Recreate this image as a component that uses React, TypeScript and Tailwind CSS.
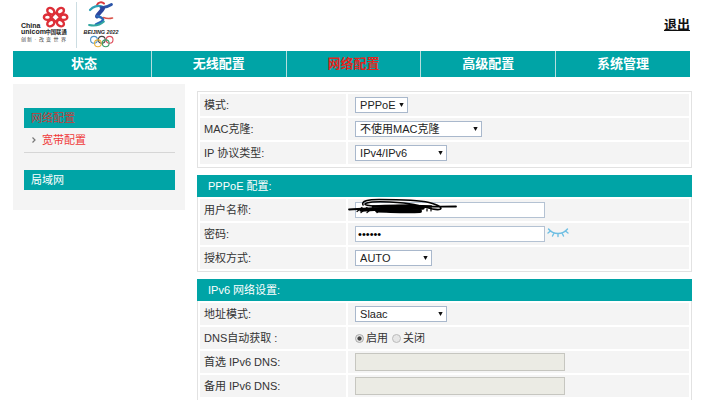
import React from 'react';

const navItems = ['状态', '无线配置', '网络配置', '高级配置', '系统管理'];

function Logo() {
  return (
    <svg
      viewBox="18 0 112 48"
      className="w-28 h-12"
      role="img"
      aria-label="China Unicom"
      fontFamily='"Liberation Sans", "Noto Sans CJK SC", sans-serif'
    >
      <g fill="none" stroke="#dd2f38" strokeWidth="2.4">
        <ellipse cx="50.8" cy="11.2" rx="3.8" ry="2.9" transform="rotate(35 50.8 11.2)" />
        <ellipse cx="60.4" cy="11.2" rx="3.8" ry="2.9" transform="rotate(-35 60.4 11.2)" />
        <ellipse cx="47.4" cy="17.2" rx="3.5" ry="2.7" />
        <ellipse cx="63.8" cy="17.2" rx="3.5" ry="2.7" />
        <ellipse cx="50.8" cy="23.2" rx="3.8" ry="2.9" transform="rotate(-35 50.8 23.2)" />
        <ellipse cx="60.4" cy="23.2" rx="3.8" ry="2.9" transform="rotate(35 60.4 23.2)" />
        <path d="M55.6 12.8l4.4 4.4-4.4 4.4-4.4-4.4z" strokeWidth="2" />
      </g>
      <text x="21" y="27.5" fontSize="7" fontWeight="bold" fill="#222">China</text>
      <text x="21" y="33.5" fontSize="7" fontWeight="bold" fill="#222">unicom</text>
      <text x="45.5" y="33.5" fontSize="5.3" fontWeight="bold" fill="#222">中国联通</text>
      <text x="21" y="40.5" fontSize="5" fill="#444">创</text>
      <text x="27" y="40.5" fontSize="5" fill="#444">新</text>
      <text x="34.5" y="40.5" fontSize="5" fill="#444">·</text>
      <text x="39" y="40.5" fontSize="5" fill="#444">改</text>
      <text x="46" y="40.5" fontSize="5" fill="#444">变</text>
      <text x="53.5" y="40.5" fontSize="5" fill="#444">世</text>
      <text x="61" y="40.5" fontSize="5" fill="#444">界</text>
      <path d="M76.5 2v46" stroke="#ccdde2" strokeWidth="1" />

      <g strokeLinecap="round" strokeLinejoin="round" fill="none">
        <path d="M97 5c1-3 5-3.5 7-1.5" stroke="#d8383c" strokeWidth="2" />
        <path d="M90 10c3-3.5 8-5 12-3.5" stroke="#2e9fb5" strokeWidth="2.2" />
        <path d="M101 7.5c4 .3 7-.8 10.5-3" stroke="#2c55a8" strokeWidth="2.8" />
        <path d="M103 8.5c-2 3.5-5 5-6 8" stroke="#2d459c" strokeWidth="4" />
        <path d="M97 16c3 1 6 1.5 6 3.5s-4 3.5-7 5" stroke="#2869b8" strokeWidth="2.6" />
        <path d="M103.5 17.5c2.500 1 5 1.500 9 .5" stroke="#d9534a" strokeWidth="1.6" />
        <path d="M89 25c5 1 11 .3 15-3.5" stroke="#32a7a0" strokeWidth="1.8" />
      </g>
      <text x="83.5" y="33.5" fontSize="5.4" fontWeight="bold" fontStyle="italic" fill="#222">BEIJING 2022</text>
      <g fill="none" strokeWidth="1.1">
        <circle cx="94" cy="39.8" r="3.4" stroke="#4c92c8" />
        <circle cx="101.8" cy="39.8" r="3.4" stroke="#444" />
        <circle cx="109.6" cy="39.8" r="3.4" stroke="#dd4a58" />
        <circle cx="97.9" cy="43.3" r="3.4" stroke="#e6b23c" />
        <circle cx="105.7" cy="43.3" r="3.4" stroke="#3a9f68" />
      </g>
    </svg>
  );
}

function Row({ label, htmlFor, children }: { label: string; htmlFor?: string; children: React.ReactNode }) {
  return (
    <tr className="h-[22px]">
      <th scope="row" className="w-[30%] bg-[#f4f4f4] p-0 pl-1 text-left font-normal whitespace-nowrap">
        <label htmlFor={htmlFor}>{label}</label>
      </th>
      <td className="bg-[#f4f4f4] p-0 pl-[7px]">
        <div className="flex items-center">{children}</div>
      </td>
    </tr>
  );
}

function Panel({ title, open, children }: { title?: string; open?: boolean; children: React.ReactNode }) {
  return (
    <section>
      {title && <h2 className="h-[22px] bg-[#00a4a6] pl-[11px] text-[11px] leading-[22px] text-white">{title}</h2>}
      <div
        className={`border-x border-[#e2e2e2] ${title ? '' : 'border-t pb-px'} ${open ? 'pb-1' : 'border-b'}`}
      >
        <table className="w-full border-separate border-spacing-[2px]">
          <tbody>{children}</tbody>
        </table>
      </div>
    </section>
  );
}

function Select({ id, value, width }: { id: string; value: string; width: string }) {
  return (
    <div className={`relative ${width}`}>
      <select
        id={id}
        defaultValue={value}
        className="block h-4 w-full appearance-none border border-[#a9b8cc] bg-white pl-1 text-[11px] leading-[14px] text-[#222]"
      >
        <option>{value}</option>
      </select>
      <svg viewBox="0 0 5 4" className="pointer-events-none absolute top-1.5 right-1 h-1 w-[5px]">
        <path d="M.3 0h4.4L2.5 4z" fill="#111" />
      </svg>
    </div>
  );
}

function Radio({ label, checked }: { label: string; checked?: boolean }) {
  return (
    <label className="mr-1 flex items-center gap-0.5">
      <input
        type="radio"
        name="dns-auto"
        defaultChecked={checked}
        className="size-[9px] appearance-none rounded-full border border-[#bbb] bg-[#e6e6e6] checked:border-[#aaa] checked:bg-[radial-gradient(circle,#444_35%,#e6e6e6_50%)]"
      />
      {label}
    </label>
  );
}

function Scribble() {
  return (
    <svg viewBox="0 0 112 18" className="pointer-events-none absolute -top-1 -left-2 h-[18px] w-28" fill="none" stroke="#000" strokeLinecap="round">
      <path d="M2 11.5C15 10 30 11 45 9.5S82 9 109 8.5" strokeWidth="1.8" />
      <path d="M14 12c18-1 38-2 62-2" strokeWidth="3.5" />
      <path d="M26 8.5c14-1 34-1 58 0" strokeWidth="2.5" />
      <path d="M30 12.5c12 0 26 1.5 43 .5" strokeWidth="4" />
      <path d="M16 7c-2-4 5-5.5 16-5.5S72 2 82 4.5s15 6 10 7-15-3-25-5S28 2.5 20 5s10 4 24 3 28-1 36 1" strokeWidth="1.6" />
      <path d="M10 13.5l5-4m-1 5l6-5m0 5l6-5m4 5l5-5M80 13v-2m4 2v-2" strokeWidth="1.2" />
    </svg>
  );
}

export default function App() {
  return (
    <div className='min-h-screen overflow-hidden bg-white pl-[13px] font-["Liberation_Sans","Noto_Sans_CJK_SC",sans-serif] text-[11px] leading-[16px] text-[#333]'>
      <header className="flex items-start justify-between pr-[19px] pb-[3px] pl-[5px]">
        <Logo />
        <a href="#logout" className="mt-4 text-[13px] leading-[18px] font-bold text-[#111] underline">
          退出
        </a>
      </header>

      <nav className="mr-[19px] flex divide-x divide-[#b5dede] bg-[#00a4a6]">
        {navItems.map((item) => (
          <a
            key={item}
            href="#nav"
            className={`flex-1 py-1 text-center text-[13px] leading-[18px] font-bold first:pl-1 ${
              item === '网络配置' ? 'text-[#e32420]' : 'text-white'
            }`}
          >
            {item}
          </a>
        ))}
      </nav>

      <div className="mr-[17px] flex items-start gap-3 pt-[7px]">
        <aside className="w-[172px] shrink-0 bg-[#f4f4f4] pt-6 pr-2.5 pb-5 pl-[11px]">
          <a href="#network" className="block h-5 bg-[#00a4a6] pl-[7px] leading-[20px] text-[#c93a36]">
            网络配置
          </a>
          <a href="#broadband" className="flex h-[25px] items-center gap-1.5 border-b border-[#d6d6d6] pl-2 text-[#f03a3a]">
            <svg viewBox="0 0 4 6" className="h-1.5 w-1" fill="none" stroke="#777" strokeWidth="1.2">
              <path d="M.5.5L3 3 .5 5.5" />
            </svg>
            宽带配置
          </a>
          <a href="#lan" className="mt-[17px] block h-5 bg-[#00a4a6] pl-[7px] leading-[20px] text-white">
            局域网
          </a>
        </aside>

        <main className="flex min-w-0 flex-1 flex-col gap-[7px] pt-[7px]">
          <Panel>
            <Row label="模式:" htmlFor="mode">
              <Select id="mode" value="PPPoE" width="w-[53px]" />
            </Row>
            <Row label="MAC克隆:" htmlFor="mac">
              <Select id="mac" value="不使用MAC克隆" width="w-[127px]" />
            </Row>
            <Row label="IP 协议类型:" htmlFor="ip-type">
              <Select id="ip-type" value="IPv4/IPv6" width="w-[92px]" />
            </Row>
          </Panel>

          <Panel title="PPPoE 配置:">
            <Row label="用户名称:" htmlFor="username">
              <div className="relative">
                <input id="username" type="text" className="block h-4 w-[190px] border border-[#b4c2d3] bg-white px-0.5" />
                <Scribble />
              </div>
            </Row>
            <Row label="密码:" htmlFor="password">
              <input
                id="password"
                type="password"
                defaultValue="123456"
                className="block h-4 w-[190px] border border-[#b4c2d3] bg-white px-0.5 text-[11px] text-black"
              />
              <button type="button" aria-label="显示密码" className="ml-0.5">
                <svg viewBox="0 0 22 12" className="block h-3 w-[22px]" fill="none" stroke="#6fbfe3" strokeWidth="1.4" strokeLinecap="round">
                  <path d="M1.5 1c5 6 14 6 19 0M3.5 3L1 5M7 5L5.5 8M11 5.5v3M15 5l1.5 3M18.5 3L21 5" />
                </svg>
              </button>
            </Row>
            <Row label="授权方式:" htmlFor="auth">
              <Select id="auth" value="AUTO" width="w-[77px]" />
            </Row>
          </Panel>

          <Panel title="IPv6 网络设置:" open>
            <Row label="地址模式:" htmlFor="addr-mode">
              <Select id="addr-mode" value="Slaac" width="w-[92px]" />
            </Row>
            <Row label="DNS自动获取 :">
              <Radio label="启用" checked />
              <Radio label="关闭" />
            </Row>
            <Row label="首选 IPv6 DNS:" htmlFor="dns1">
              <input id="dns1" type="text" disabled className="block h-[18px] w-[210px] border border-[#c6c6c0] bg-[#ebebe4]" />
            </Row>
            <Row label="备用 IPv6 DNS:" htmlFor="dns2">
              <input id="dns2" type="text" disabled className="block h-[18px] w-[210px] border border-[#c6c6c0] bg-[#ebebe4]" />
            </Row>
          </Panel>
        </main>
      </div>
    </div>
  );
}
